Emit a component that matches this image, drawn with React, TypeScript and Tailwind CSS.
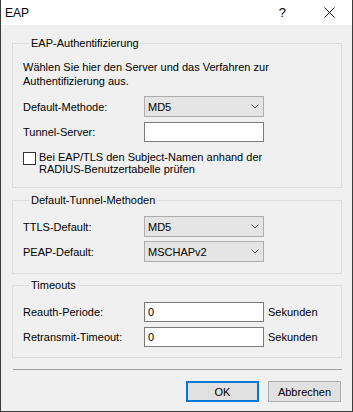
import { useState } from 'react';

function Chevron() {
  return (
    <svg width="8" height="5" viewBox="0 0 8 5" className="text-[#555]">
      <path d="M0.5 0.5 L4 4 L7.5 0.5" fill="none" stroke="currentColor" strokeWidth="1" />
    </svg>
  );
}

function Select({ value }: { value: string }) {
  return (
    <div className="w-[120px] h-[21px] flex items-center justify-between bg-[#e5e5e5] border border-[#adadad] pl-[3px] pr-[4px]">
      <span>{value}</span>
      <Chevron />
    </div>
  );
}

function TextBox({ value = '' }: { value?: string }) {
  return (
    <div className="w-[120px] h-[20px] flex items-center bg-white border border-[#7a7a7a] px-[3px]">
      {value}
    </div>
  );
}

function Group({ title, children, className = '' }: { title: string; children: React.ReactNode; className?: string }) {
  return (
    <fieldset className={`border border-[#dcdcdc] pl-[10px] pr-[10px] ${className}`}>
      <legend className="ml-[6px] px-[2px] leading-[14px]">{title}</legend>
      {children}
    </fieldset>
  );
}

function Row({ label, children, className = '' }: { label: string; children: React.ReactNode; className?: string }) {
  return (
    <div className={`flex items-center h-[21px] ${className}`}>
      <div className="w-[121px]">{label}</div>
      {children}
    </div>
  );
}

export default function App() {
  const [checked, setChecked] = useState(false);

  return (
    <div
      className="w-[353px] h-[412px] flex flex-col bg-[#f0f0f0] border-x border-b border-[#3c3c3c] text-[11px] leading-[14px] text-black"
      style={{ fontFamily: '"Liberation Sans", Arial, sans-serif' }}
    >
      {/* title bar */}
      <div className="h-[25px] bg-white flex items-center shrink-0">
        <span className="ml-[4px] text-[12px]">EAP</span>
        <span className="ml-auto mr-[38px] text-[13px]">?</span>
        <svg width="11" height="11" viewBox="0 0 11 11" className="mr-[17px]">
          <path d="M0.5 0.5 L10.5 10.5 M10.5 0.5 L0.5 10.5" stroke="#111" strokeWidth="1" />
        </svg>
      </div>

      <div className="flex-1 flex flex-col pl-[11px] pr-[10px] pt-[11px]">
        <Group title="EAP-Authentifizierung" className="h-[152px]">
          <p className="mt-[10px]">
            Wählen Sie hier den Server und das Verfahren zur
            <br />
            Authentifizierung aus.
          </p>
          <Row label="Default-Methode:" className="mt-[8px]">
            <Select value="MD5" />
          </Row>
          <Row label="Tunnel-Server:" className="mt-[4px]">
            <TextBox />
          </Row>
          <label className="flex items-start gap-[3px] mt-[9px]">
            <span
              onClick={() => setChecked(!checked)}
              className="w-[13px] h-[13px] mt-[1px] bg-white border border-[#333] shrink-0"
            />
            <span className="leading-[12px]">
              Bei EAP/TLS den Subject-Namen anhand der
              <br />
              RADIUS-Benutzertabelle prüfen
            </span>
          </label>
        </Group>

        <Group title="Default-Tunnel-Methoden" className="mt-[5px] h-[81px]">
          <Row label="TTLS-Default:" className="mt-[9px]">
            <Select value="MD5" />
          </Row>
          <Row label="PEAP-Default:" className="mt-[4px]">
            <Select value="MSCHAPv2" />
          </Row>
        </Group>

        <Group title="Timeouts" className="mt-[4px] h-[80px]">
          <Row label="Reauth-Periode:" className="mt-[9px]">
            <TextBox value="0" />
            <span className="ml-[4px]">Sekunden</span>
          </Row>
          <Row label="Retransmit-Timeout:" className="mt-[4px]">
            <TextBox value="0" />
            <span className="ml-[4px]">Sekunden</span>
          </Row>
        </Group>

        <div className="mt-[11px] h-px bg-[#a0a0a0] ml-[1px] mr-0" />

        <div className="flex justify-end gap-[9px] mt-[11px] mr-[1px]">
          <button className="w-[73px] h-[21px] bg-[#e1e1e1] border-2 border-[#0078d7]">OK</button>
          <button className="w-[73px] h-[21px] bg-[#e1e1e1] border border-[#adadad]">Abbrechen</button>
        </div>
      </div>
    </div>
  );
}
